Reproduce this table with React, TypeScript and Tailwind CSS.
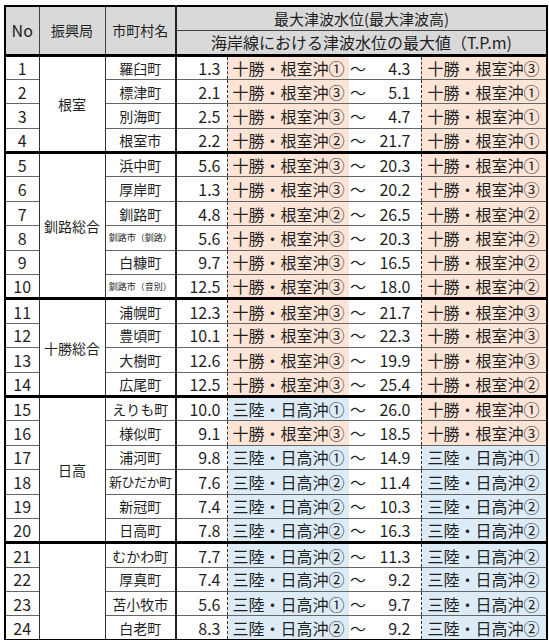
type Row = {
  no: number;
  city: string;
  min: string;
  s1: string;
  max: string;
  s2: string;
  small?: boolean;
  narrow?: boolean;
};

type Group = { name: string; rows: Row[] };

const groups: Group[] = [
  {
    name: "根室",
    rows: [
      { no: 1, city: "羅臼町", min: "1.3", s1: "十勝・根室沖①", max: "4.3", s2: "十勝・根室沖③" },
      { no: 2, city: "標津町", min: "2.1", s1: "十勝・根室沖③", max: "5.1", s2: "十勝・根室沖①" },
      { no: 3, city: "別海町", min: "2.5", s1: "十勝・根室沖③", max: "4.7", s2: "十勝・根室沖①" },
      { no: 4, city: "根室市", min: "2.2", s1: "十勝・根室沖②", max: "21.7", s2: "十勝・根室沖①" },
    ],
  },
  {
    name: "釧路総合",
    rows: [
      { no: 5, city: "浜中町", min: "5.6", s1: "十勝・根室沖③", max: "20.3", s2: "十勝・根室沖①" },
      { no: 6, city: "厚岸町", min: "1.3", s1: "十勝・根室沖③", max: "20.2", s2: "十勝・根室沖③" },
      { no: 7, city: "釧路町", min: "4.8", s1: "十勝・根室沖②", max: "26.5", s2: "十勝・根室沖②" },
      { no: 8, city: "釧路市（釧路）", min: "5.6", s1: "十勝・根室沖③", max: "20.3", s2: "十勝・根室沖②", small: true },
      { no: 9, city: "白糠町", min: "9.7", s1: "十勝・根室沖③", max: "16.5", s2: "十勝・根室沖②" },
      { no: 10, city: "釧路市（音別）", min: "12.5", s1: "十勝・根室沖③", max: "18.0", s2: "十勝・根室沖②", small: true },
    ],
  },
  {
    name: "十勝総合",
    rows: [
      { no: 11, city: "浦幌町", min: "12.3", s1: "十勝・根室沖③", max: "21.7", s2: "十勝・根室沖③" },
      { no: 12, city: "豊頃町", min: "10.1", s1: "十勝・根室沖③", max: "22.3", s2: "十勝・根室沖③" },
      { no: 13, city: "大樹町", min: "12.6", s1: "十勝・根室沖③", max: "19.9", s2: "十勝・根室沖③" },
      { no: 14, city: "広尾町", min: "12.5", s1: "十勝・根室沖③", max: "25.4", s2: "十勝・根室沖②" },
    ],
  },
  {
    name: "日高",
    rows: [
      { no: 15, city: "えりも町", min: "10.0", s1: "三陸・日高沖①", max: "26.0", s2: "十勝・根室沖①" },
      { no: 16, city: "様似町", min: "9.1", s1: "十勝・根室沖③", max: "18.5", s2: "十勝・根室沖③" },
      { no: 17, city: "浦河町", min: "9.8", s1: "三陸・日高沖①", max: "14.9", s2: "三陸・日高沖①" },
      { no: 18, city: "新ひだか町", min: "7.6", s1: "三陸・日高沖②", max: "11.4", s2: "三陸・日高沖②", narrow: true },
      { no: 19, city: "新冠町", min: "7.4", s1: "三陸・日高沖②", max: "10.3", s2: "三陸・日高沖②" },
      { no: 20, city: "日高町", min: "7.8", s1: "三陸・日高沖②", max: "16.3", s2: "三陸・日高沖②" },
    ],
  },
  {
    name: "",
    rows: [
      { no: 21, city: "むかわ町", min: "7.7", s1: "三陸・日高沖②", max: "11.3", s2: "三陸・日高沖②" },
      { no: 22, city: "厚真町", min: "7.4", s1: "三陸・日高沖②", max: "9.2", s2: "三陸・日高沖②" },
      { no: 23, city: "苫小牧市", min: "5.6", s1: "三陸・日高沖①", max: "9.7", s2: "三陸・日高沖②" },
      { no: 24, city: "白老町", min: "8.3", s1: "三陸・日高沖②", max: "9.2", s2: "三陸・日高沖②" },
    ],
  },
];

const bgFor = (s: string) => (s.startsWith("十勝") ? "bg-[#fce4d6]" : "bg-[#ddebf7]");

export default function App() {
  return (
    <div className="min-h-screen bg-white pl-[4px] pt-[5px] font-['Noto_Sans_CJK_JP',sans-serif] text-[#1f1f1f]">
      <table className="w-[542px] table-fixed border-collapse border-2 border-black leading-none">
        <colgroup>
          <col className="w-[34px]" />
          <col className="w-[66px]" />
          <col className="w-[71px]" />
          <col className="w-[51px]" />
          <col className="w-[122px]" />
          <col className="w-[23px]" />
          <col className="w-[49px]" />
          <col className="w-[126px]" />
        </colgroup>
        <thead>
          <tr className="h-[24px]">
            <th rowSpan={2} className="border border-[#444] border-b-[3px] border-b-black bg-[#d9d9d9] text-[16px] font-normal">
              No
            </th>
            <th rowSpan={2} className="border border-[#444] border-b-[3px] border-b-black bg-[#d9d9d9] text-[14px] font-normal">
              振興局
            </th>
            <th rowSpan={2} className="border border-[#444] border-r-2 border-r-[#222] border-b-[3px] border-b-black bg-[#d9d9d9] text-[14px] font-normal">
              市町村名
            </th>
            <th colSpan={5} className="border border-[#444] bg-[#d9d9d9] text-[15px] font-normal">
              最大津波水位(最大津波高)
            </th>
          </tr>
          <tr className="h-[25px]">
            <th colSpan={5} className="border border-[#444] border-b-[3px] border-b-black bg-[#d9d9d9] text-[16px] font-normal">
              海岸線における津波水位の最大値（T.P.m)
            </th>
          </tr>
        </thead>
        <tbody>
          {groups.map((g) =>
            g.rows.map((r, i) => {
              const top = i === 0 ? "border-t-[3px] border-t-black" : "border-t border-t-[#666]";
              return (
                <tr key={r.no} className="h-[24.4px]">
                  <td className={`${top} border-r border-r-[#333] text-center text-[16px]`}>{r.no}</td>
                  {i === 0 && (
                    <td
                      rowSpan={g.rows.length}
                      className="border-t-[3px] border-t-black border-r border-r-[#333] text-center text-[14px]"
                    >
                      {g.name}
                    </td>
                  )}
                  <td
                    className={`${top} border-r-2 border-r-[#222] whitespace-nowrap text-center ${
                      r.small ? "text-[9px]" : r.narrow ? "text-[13px] tracking-[-0.5px]" : "text-[14px]"
                    }`}
                  >
                    {r.city}
                  </td>
                  <td className={`${top} pr-[6px] text-right text-[16px]`}>{r.min}</td>
                  <td className={`${top} ${bgFor(r.s1)} [border-left:1px_dashed_#333] pl-[5px] whitespace-nowrap text-[16px]`}>
                    {r.s1}
                  </td>
                  <td className={`${top} pl-[1px] text-[16px]`}>～</td>
                  <td className={`${top} pr-[10px] text-right text-[16px]`}>{r.max}</td>
                  <td className={`${top} ${bgFor(r.s2)} [border-left:1px_dashed_#333] pl-[6px] whitespace-nowrap text-[16px]`}>
                    {r.s2}
                  </td>
                </tr>
              );
            })
          )}
        </tbody>
      </table>
    </div>
  );
}
